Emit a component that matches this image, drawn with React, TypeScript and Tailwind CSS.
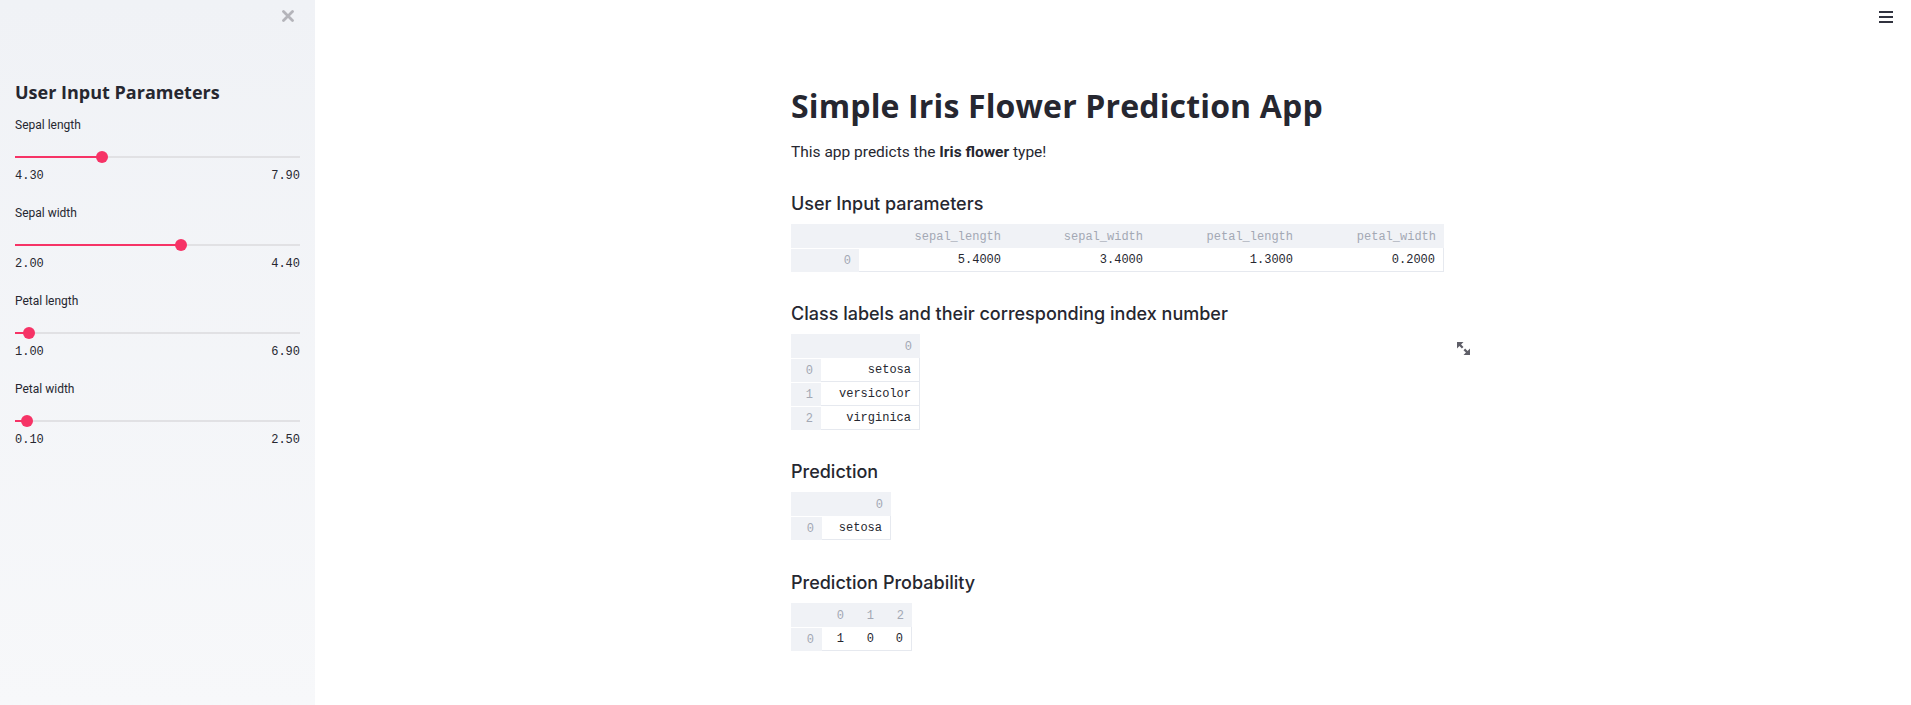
import React from "react";

const sans = "font-['Roboto',sans-serif]";
const head = "font-['Open_Sans',sans-serif]";
const sub = "font-['Inter',sans-serif]";
const mono = "font-['Liberation_Mono',monospace]";

type SliderProps = { label: string; min: number; max: number; value: number };

const Slider: React.FC<SliderProps> = ({ label, min, max, value }) => {
  const pct = ((value - min) / (max - min)) * 100;
  return (
    <div className="flex flex-col">
      <div className="h-4 text-[12px] leading-4 text-[#262730]">{label}</div>
      <div className="relative mt-[14px] h-5 flex items-center">
        <div className="h-[2px] w-full bg-[#e1e1e4]" />
        <div className="absolute left-0 h-[2px] bg-[#f63366]" style={{ width: `${pct}%` }} />
        <div
          className="absolute h-3 w-3 -translate-x-1/2 rounded-full bg-[#f63366]"
          style={{ left: `${pct}%` }}
        />
      </div>
      <div className={`mt-px flex justify-between h-4 text-[12px] leading-4 text-[#262730] ${mono}`}>
        <span>{min.toFixed(2)}</span>
        <span>{max.toFixed(2)}</span>
      </div>
    </div>
  );
};

type TableProps = {
  columns: string[];
  rows: { index: string; cells: string[] }[];
  indexWidth: number;
  widths: number[];
};

// dataframe-style table, grey header row and index column
const DataTable: React.FC<TableProps> = ({ columns, rows, indexWidth, widths }) => (
  <div className={`flex w-fit flex-col text-[12px] ${mono}`}>
    <div className="flex h-6 bg-[#f0f2f6] text-[#a3a8b4]">
      <div style={{ width: indexWidth }} />
      {columns.map((c, i) => (
        <div key={c} style={{ width: widths[i] }} className="flex items-center justify-end pr-2 pt-px">
          {c}
        </div>
      ))}
    </div>
    {rows.map((r) => (
      <div key={r.index} className="flex h-6">
        <div
          style={{ width: indexWidth }}
          className="flex items-center justify-end pr-2 bg-[#f0f2f6] border-t border-white text-[#a3a8b4]"
        >
          {r.index}
        </div>
        {r.cells.map((c, i) => (
          <div
            key={i}
            style={{ width: widths[i] }}
            className={`flex items-center justify-end pr-2 border-b border-[#e6e9ef] text-[#262730] ${
              i === r.cells.length - 1 ? "border-r" : ""
            }`}
          >
            {c}
          </div>
        ))}
      </div>
    ))}
  </div>
);

const Heading: React.FC<{ children: React.ReactNode; className?: string }> = ({ children, className = "mt-[30px]" }) => (
  <h3 className={`h-6 text-[18px] leading-6 font-medium text-[#262730] ${sub} ${className}`}>{children}</h3>
);

export default function App() {
  return (
    <div className={`flex h-[705px] w-full overflow-hidden bg-white ${sans}`}>
      <aside className="relative w-[315px] shrink-0 bg-gradient-to-b from-[#f0f2f6] to-[#f7f8fa] px-[15px] pt-[80px]">
        <button className="absolute left-[282px] top-[10px] h-3 w-3">
          <svg viewBox="0 0 12 12" className="h-3 w-3">
            <path d="M1.5 1.5 L10.5 10.5 M10.5 1.5 L1.5 10.5" stroke="#b4b4ba" strokeWidth="2.8" strokeLinecap="round" />
          </svg>
        </button>
        <h2 className={`h-6 text-[18px] leading-6 font-bold text-[#262730] ${head}`}>User Input Parameters</h2>
        <div className="mt-[13px] flex flex-col gap-[21px]">
          <Slider label="Sepal length" min={4.3} max={7.9} value={5.4} />
          <Slider label="Sepal width" min={2.0} max={4.4} value={3.4} />
          <Slider label="Petal length" min={1.0} max={6.9} value={1.3} />
          <Slider label="Petal width" min={0.1} max={2.5} value={0.2} />
        </div>
      </aside>

      <main className="relative flex-1">
        <div className="absolute right-[18px] top-[11px] flex flex-col gap-[3px]">
          <div className="h-[2px] w-[14px] bg-[#31333f]" />
          <div className="h-[2px] w-[14px] bg-[#31333f]" />
          <div className="h-[2px] w-[14px] bg-[#31333f]" />
        </div>

        <div className="mx-auto w-[644px] pt-[86px]">
          <h1 className={`h-10 text-[32px] leading-10 font-bold tracking-[0.15px] text-[#262730] ${head}`}>
            Simple Iris Flower Prediction App
          </h1>
          <p className="mt-[14px] h-6 text-[15.5px] leading-6 text-[#262730]">
            This app predicts the <strong className="font-bold">Iris flower</strong> type!
          </p>

          <Heading className="mt-[28px]">User Input parameters</Heading>
          <div className="mt-2">
            <DataTable
              columns={["sepal_length", "sepal_width", "petal_length", "petal_width"]}
              rows={[{ index: "0", cells: ["5.4000", "3.4000", "1.3000", "0.2000"] }]}
              indexWidth={68}
              widths={[150, 142, 150, 143]}
            />
          </div>

          <Heading>Class labels and their corresponding index number</Heading>
          <div className="relative mt-2">
            <DataTable
              columns={["0"]}
              rows={[
                { index: "0", cells: ["setosa"] },
                { index: "1", cells: ["versicolor"] },
                { index: "2", cells: ["virginica"] },
              ]}
              indexWidth={30}
              widths={[99]}
            />
            <svg viewBox="0 0 8 8" className="absolute left-[666px] top-[8px] h-[13px] w-[13px]" fill="#5f5f68">
              <path d="M0 0v4l1.5-1.5 1.5 1.5 1-1-1.5-1.5 1.5-1.5h-4zm5 4l-1 1 1.5 1.5-1.5 1.5h4v-4l-1.5 1.5-1.5-1.5z" />
            </svg>
          </div>

          <Heading>Prediction</Heading>
          <div className="mt-2">
            <DataTable columns={["0"]} rows={[{ index: "0", cells: ["setosa"] }]} indexWidth={31} widths={[69]} />
          </div>

          <Heading className="mt-[31px]">Prediction Probability</Heading>
          <div className="mt-2">
            <DataTable
              columns={["0", "1", "2"]}
              rows={[{ index: "0", cells: ["1", "0", "0"] }]}
              indexWidth={31}
              widths={[30, 30, 30]}
            />
          </div>
        </div>
      </main>
    </div>
  );
}
